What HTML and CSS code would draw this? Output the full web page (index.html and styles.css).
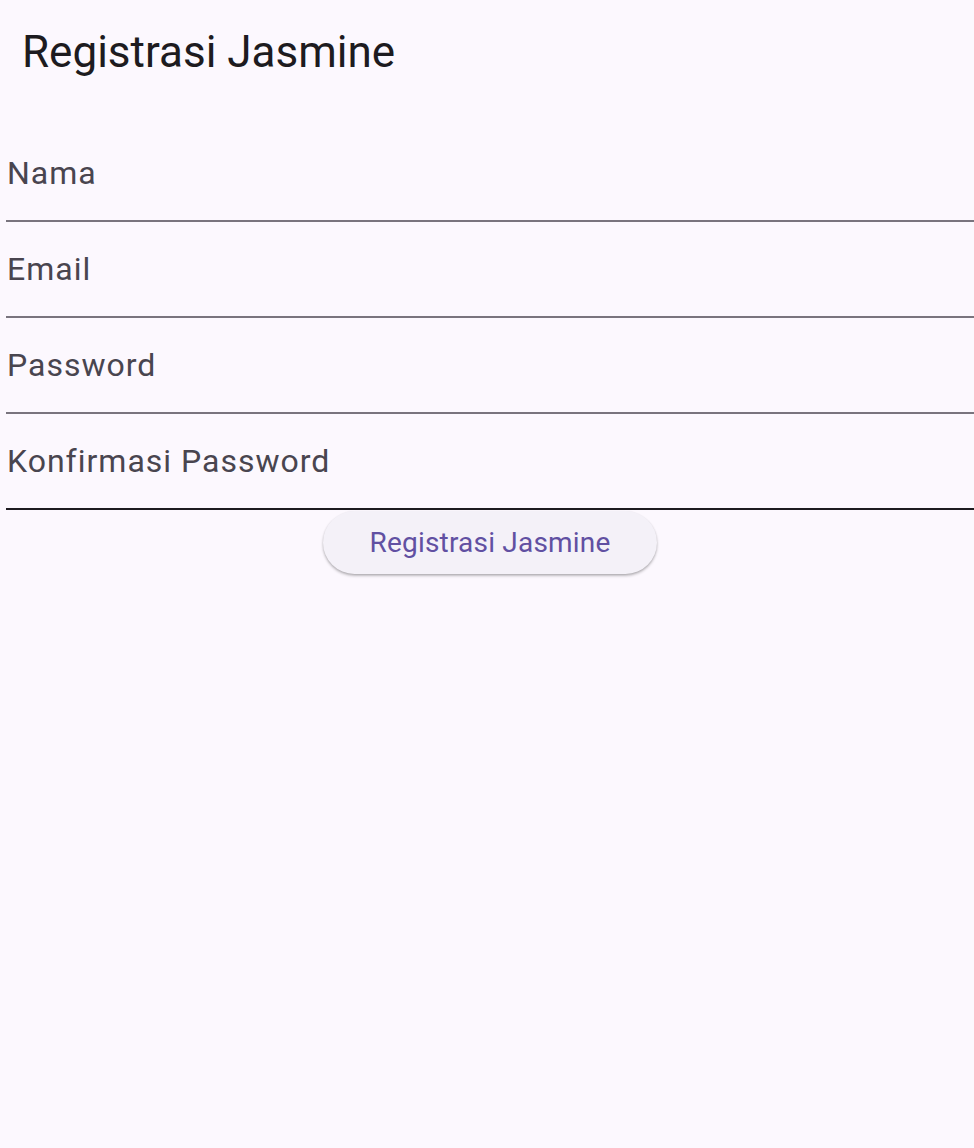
FILE: index.html
```html
<!DOCTYPE html>
<html lang="id">
<head>
<meta charset="utf-8">
<title>Registrasi Jasmine</title>
<link rel="stylesheet" href="styles.css">
</head>
<body>
<header class="appbar">
  <h1 class="title">Registrasi Jasmine</h1>
</header>
<main class="form">
  <label class="field"><span class="label">Nama</span></label>
  <label class="field"><span class="label">Email</span></label>
  <label class="field"><span class="label">Password</span></label>
  <label class="field field-active"><span class="label">Konfirmasi Password</span></label>
  <div class="actions">
    <button class="btn" type="button">Registrasi Jasmine</button>
  </div>
</main>
</body>
</html>
```

FILE: styles.css
```css
html, body {
  margin: 0;
  padding: 0;
}
body {
  background: #fcf8fe;
  font-family: Roboto, "Noto Sans", sans-serif;
  color: #1d1b20;
  width: 974px;
  height: 1148px;
  overflow: hidden;
}
.appbar {
  height: 104px;
  display: flex;
  align-items: center;
  padding-left: 22px;
}
.title {
  margin: 0;
  font-size: 44px;
  font-weight: 400;
  line-height: normal;
  color: #1d1b20;
}
.form {
  display: flex;
  flex-direction: column;
  padding: 22px 0 0 6px;
}
.field {
  box-sizing: border-box;
  height: 96px;
  padding-top: 28px;
  border-bottom: 2px solid #79747e;
  display: block;
}
.field-active {
  border-bottom-color: #1d1b20;
}
.label {
  display: block;
  font-size: 32px;
  line-height: normal;
  letter-spacing: 1px;
  color: #49454f;
  padding-left: 1px;
}
.actions {
  display: flex;
  justify-content: center;
  padding-top: 1px;
}
.btn {
  height: 63px;
  padding: 0 46.5px;
  border: none;
  border-radius: 32px;
  background: #f4f1f8;
  color: #6150a2;
  font-family: Roboto, "Noto Sans", sans-serif;
  font-size: 28px;
  font-weight: 400;
  letter-spacing: 0.2px;
  box-shadow: 0 2px 3px rgba(0, 0, 0, 0.22), 0 1px 2px rgba(0, 0, 0, 0.12);
  cursor: pointer;
}
```
